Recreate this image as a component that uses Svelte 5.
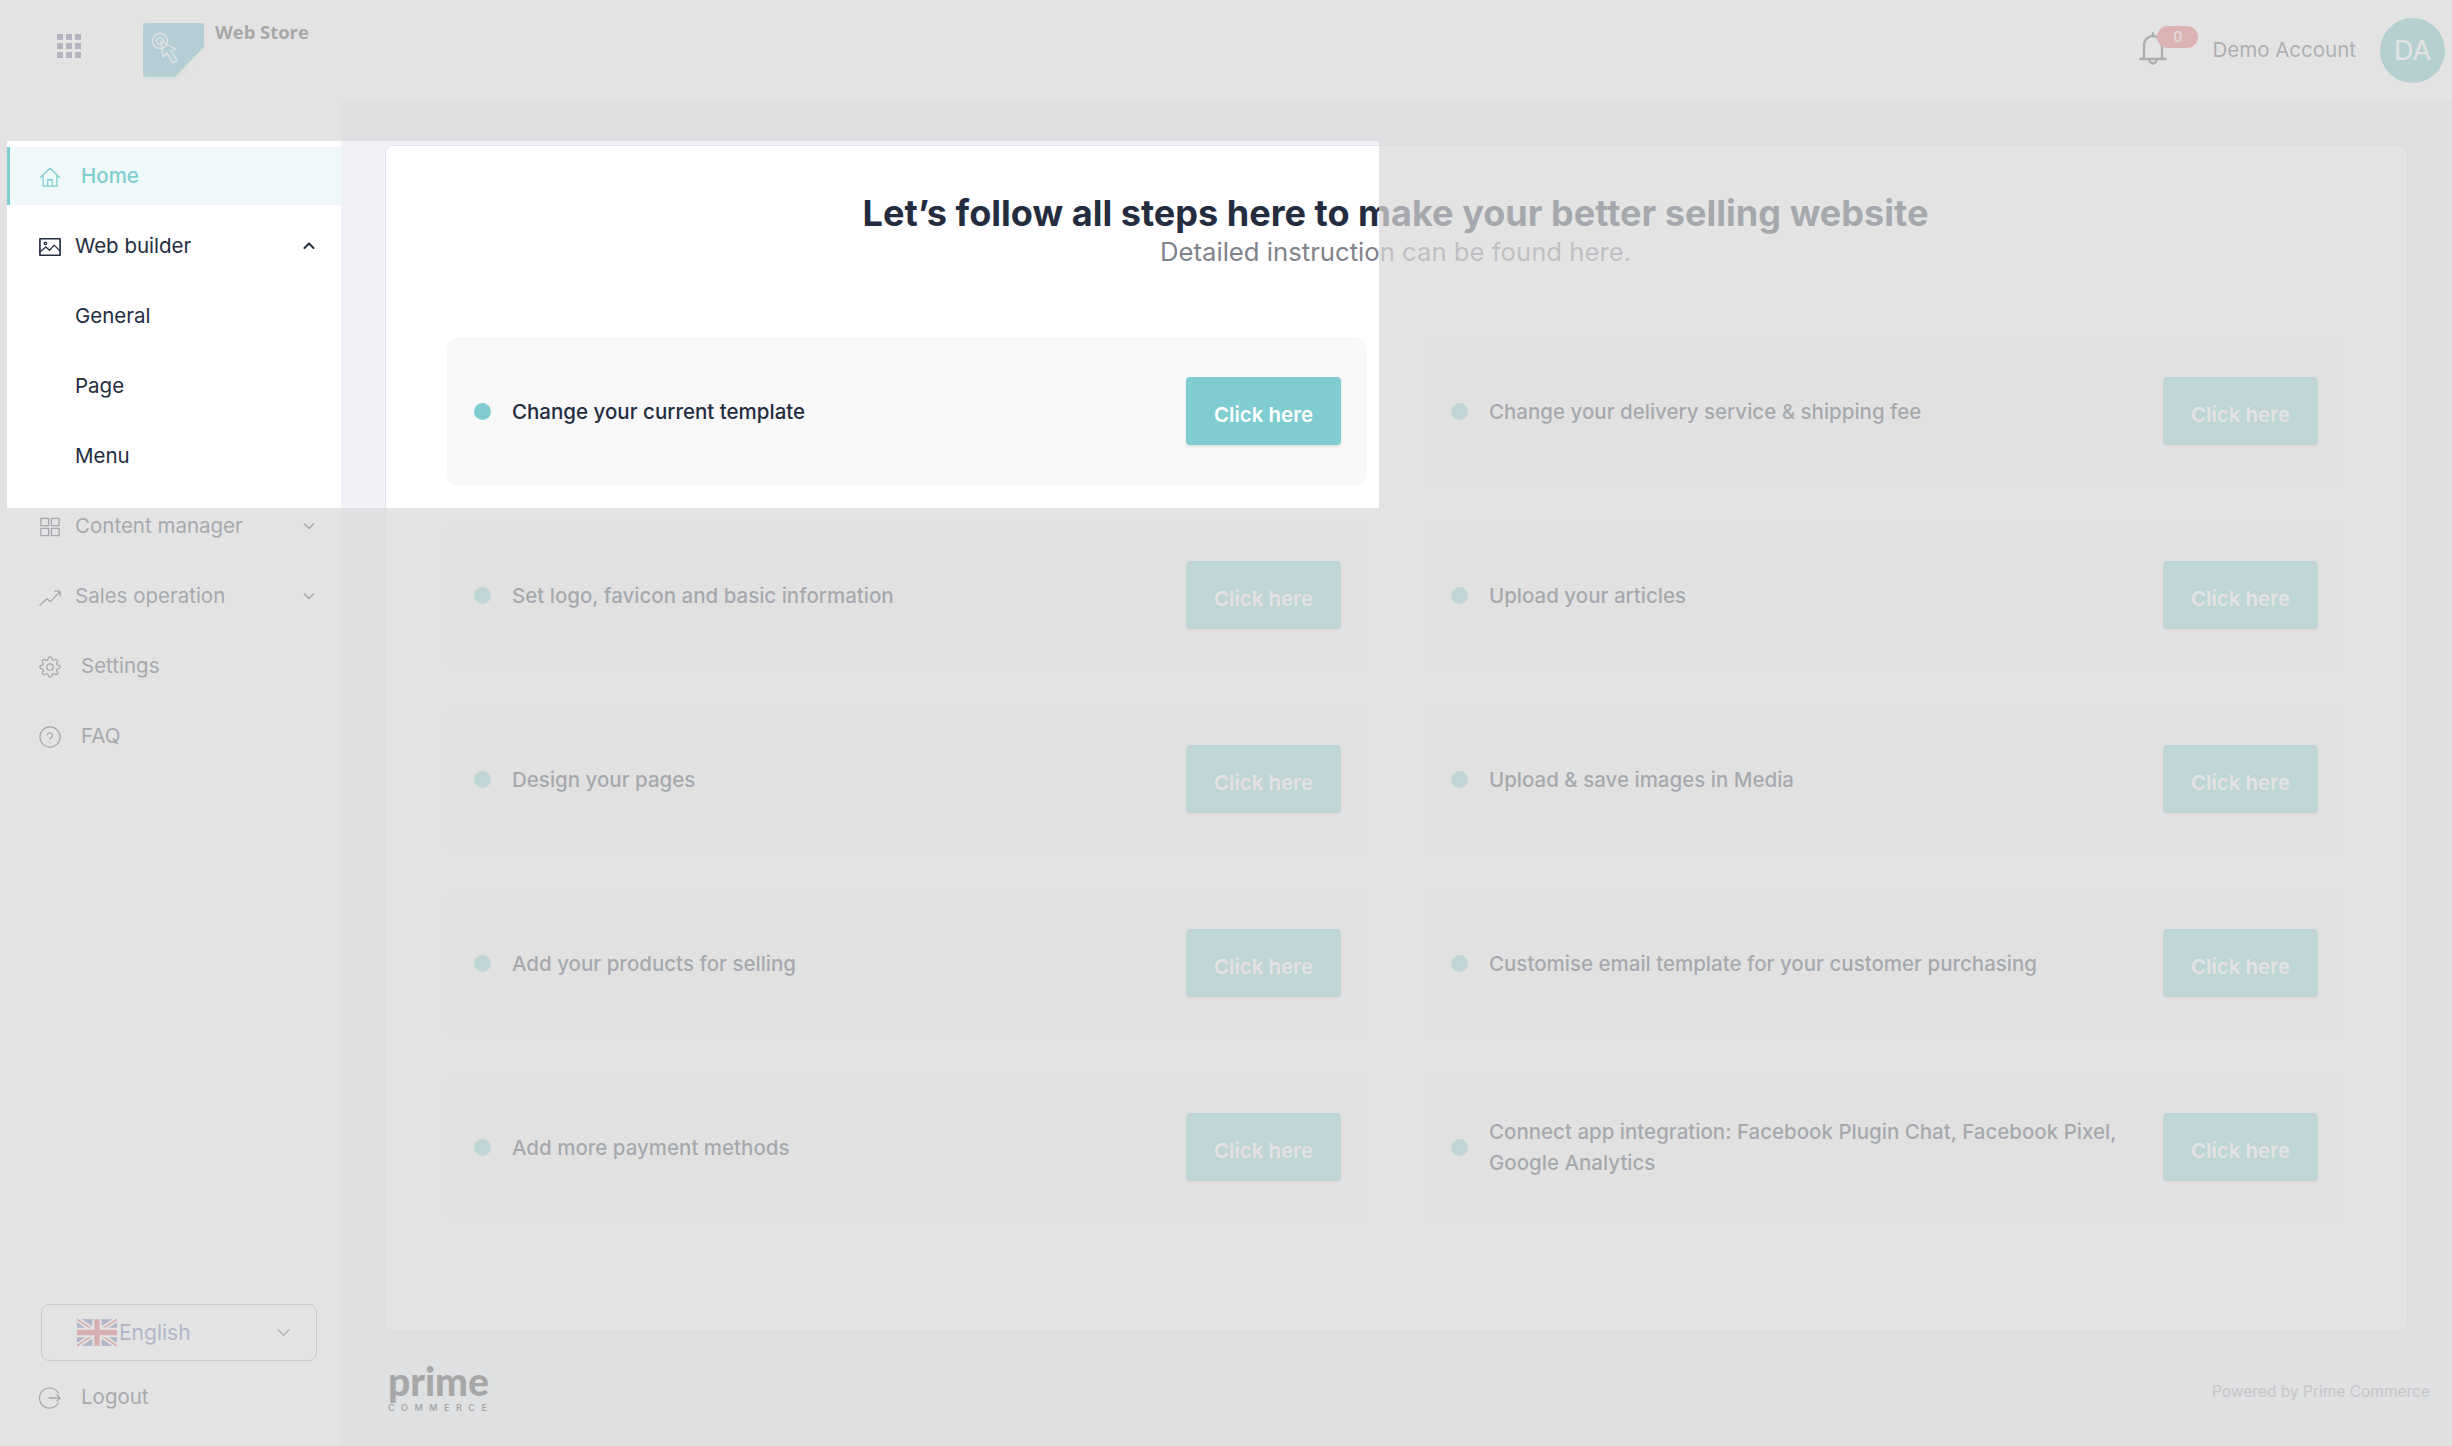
<script>
  const steps = [
    "Change your current template",
    "Change your delivery service & shipping fee",
    "Set logo, favicon and basic information",
    "Upload your articles",
    "Design your pages",
    "Upload & save images in Media",
    "Add your products for selling",
    "Customise email template for your customer purchasing",
    "Add more payment methods",
    "Connect app integration: Facebook Plugin Chat, Facebook Pixel, Google Analytics",
  ];

  const nav = [
    { label: "Home", icon: "home", active: true },
    { label: "Web builder", icon: "image", chevron: "up" },
    { label: "General", sub: true },
    { label: "Page", sub: true },
    { label: "Menu", sub: true },
    { label: "Content manager", icon: "grid", chevron: "down" },
    { label: "Sales operation", icon: "chart", chevron: "down" },
    { label: "Settings", icon: "gear", wide: true },
    { label: "FAQ", icon: "help", wide: true },
  ];
</script>

{#snippet icon(name)}
  <svg class="icon" viewBox="0 0 24 24" fill="none" stroke="currentColor" stroke-width="1.4" stroke-linecap="round" stroke-linejoin="round">
    {#if name === "home"}
      <path d="M1.500 12.500 12 2.500l10.500 10M4.500 10.500V22h15V10.500M9.500 22v-7h5v7" />
    {:else if name === "image"}
      <rect x="1" y="3" width="22" height="18" stroke-width="1.8" />
      <circle cx="7" cy="8" r="1.4" />
      <path d="m1.500 17 6-5 4 3.500 5-5.500 6 6" />
    {:else if name === "grid"}
      <rect x="2" y="2.500" width="8.500" height="8" />
      <rect x="13.500" y="2.500" width="8.500" height="8" />
      <rect x="2" y="13.500" width="8.500" height="8" />
      <rect x="13.500" y="13.500" width="8.500" height="8" />
    {:else if name === "chart"}
      <path d="m1 21 7.500-7 4 3L23 6M17 5.500h6v5.500" />
    {:else if name === "gear"}
      <circle cx="12" cy="12" r="3.500" />
      <path d="M19.400 15a1.650 1.650 0 0 0 .33 1.820l.06.06a2 2 0 0 1 0 2.830 2 2 0 0 1-2.830 0l-.06-.06a1.650 1.650 0 0 0-1.820-.33 1.650 1.650 0 0 0-1 1.510V21a2 2 0 0 1-2 2 2 2 0 0 1-2-2v-.09A1.650 1.650 0 0 0 9 19.400a1.650 1.650 0 0 0-1.820.33l-.06.06a2 2 0 0 1-2.830 0 2 2 0 0 1 0-2.830l.06-.06a1.650 1.650 0 0 0 .33-1.820 1.650 1.650 0 0 0-1.510-1H3a2 2 0 0 1-2-2 2 2 0 0 1 2-2h.09A1.650 1.650 0 0 0 4.600 9a1.650 1.650 0 0 0-.33-1.820l-.06-.06a2 2 0 0 1 0-2.830 2 2 0 0 1 2.830 0l.06.06a1.650 1.650 0 0 0 1.820.33H9a1.650 1.650 0 0 0 1-1.510V3a2 2 0 0 1 2-2 2 2 0 0 1 2 2v.09a1.650 1.650 0 0 0 1 1.510 1.650 1.650 0 0 0 1.820-.33l.06-.06a2 2 0 0 1 2.830 0 2 2 0 0 1 0 2.830l-.06.06a1.650 1.650 0 0 0-.33 1.820V9a1.650 1.650 0 0 0 1.510 1H21a2 2 0 0 1 2 2 2 2 0 0 1-2 2h-.09a1.650 1.650 0 0 0-1.510 1z" />
    {:else if name === "help"}
      <circle cx="12" cy="12" r="11" />
      <path d="M9 9.500a3 3 0 0 1 5.800.8c0 2-2.800 2.400-2.800 4M12 18h.01" />
    {:else if name === "logout"}
      <path d="M21 6.500A11 11 0 1 0 21 17.500M11 12h12M19.500 8.500 23 12l-3.500 3.500" />
    {/if}
  </svg>
{/snippet}

{#snippet chevron(dir)}
  <svg class="chevron" class:strong={dir === "up"} viewBox="0 0 12 8" fill="none" stroke="currentColor" stroke-width="1.5" stroke-linecap="round" stroke-linejoin="round">
    {#if dir === "up"}
      <path d="m1.500 6 4.500-4.500L10.500 6" />
    {:else}
      <path d="m1.500 2 4.500 4.500L10.500 2" />
    {/if}
  </svg>
{/snippet}

<div class="shell">
  <header class="topbar">
    <div class="apps">
      {#each Array(9) as _}
        <span></span>
      {/each}
    </div>
    <svg class="logo" viewBox="0 0 64 58">
      <path d="M5 3h55a3 3 0 0 1 3 3v21L35 57H5a3 3 0 0 1-3-3V6a3 3 0 0 1 3-3z" fill="#000" opacity="0.03" />
      <path d="M3 0h55a3 3 0 0 1 3 3v21L32 54H3a3 3 0 0 1-3-3V3a3 3 0 0 1 3-3z" fill="#5bb4d0" />
      <g fill="none" stroke="#fff" stroke-width="1.300" stroke-linecap="round" stroke-linejoin="round">
        <circle cx="17" cy="18" r="7.500" />
        <circle cx="17" cy="18" r="3.500" />
        <path d="m18 18 2 16 4-4 6 10 4-3-6-9 5-2z" />
      </g>
    </svg>
    <span class="store">Web Store</span>
    <div class="account">
      <div class="bell">
        <svg viewBox="0 0 28 34" fill="none" stroke="#3e4347" stroke-width="2.400" stroke-linecap="round" stroke-linejoin="round">
          <path d="M1.500 28h25M5 28V14a9 9 0 0 1 18 0v14M14 2.500V5M10.500 29a3.500 3.500 0 0 0 7 0" />
        </svg>
        <span class="badge">0</span>
      </div>
      <span class="name">Demo Account</span>
      <span class="avatar">DA</span>
    </div>
  </header>

  <div class="body">
    <aside class="sidebar">
      <nav class="nav">
        {#each nav as item}
          <a class="row" class:active={item.active} class:sub={item.sub} class:wide={item.wide} href="#top">
            {#if item.icon}
              {@render icon(item.icon)}
            {/if}
            <span class="label">{item.label}</span>
            {#if item.chevron}
              {@render chevron(item.chevron)}
            {/if}
          </a>
        {/each}
      </nav>
      <div class="bottom">
        <div class="lang">
          <svg class="flag" viewBox="0 0 60 40">
            <rect width="60" height="40" fill="#495a9e" />
            <path d="M0 0l60 40M60 0 0 40" stroke="#fff" stroke-width="8" />
            <path d="M0 0l60 40M60 0 0 40" stroke="#d8474e" stroke-width="2.500" />
            <path d="M30 0v40M0 20h60" stroke="#fff" stroke-width="14" />
            <path d="M30 0v40M0 20h60" stroke="#d8474e" stroke-width="8" />
          </svg>
          <span>English</span>
          <svg class="lang-caret" viewBox="0 0 14 9" fill="none" stroke="currentColor" stroke-width="1.300" stroke-linecap="round" stroke-linejoin="round">
            <path d="m1 1.500 6 6 6-6" />
          </svg>
        </div>
        <a class="row wide logout" href="#top">
          {@render icon("logout")}
          <span class="label">Logout</span>
        </a>
      </div>
    </aside>

    <main class="main">
      <section class="card">
        <h1>Let’s follow all steps here to make your better selling website</h1>
        <p class="lead">Detailed instruction can be found here.</p>
        <div class="steps">
          {#each steps as step}
            <div class="step">
              <span class="dot"></span>
              <span class="text">{step}</span>
              <button class="go">Click here</button>
            </div>
          {/each}
        </div>
      </section>
      <footer class="foot">
        <div class="brand">
          <span class="prime">prime</span>
          <span class="commerce">COMMERCE</span>
        </div>
        <span class="powered">Powered by Prime Commerce</span>
      </footer>
    </main>
  </div>

  <!-- tour spotlight: the shadow dims everything around the hole -->
  <div class="spotlight"></div>
</div>

<style>
  :global(body) {
    margin: 0;
    font-family: Inter, "Liberation Sans", sans-serif;
  }
  .shell {
    position: relative;
    display: flex;
    flex-direction: column;
    width: 100vw;
    height: 100vh;
    overflow: hidden;
    background: #fff;
    color: #232d3f;
  }
  .spotlight {
    position: absolute;
    left: 7px;
    top: 141px;
    width: 1372px;
    height: 367px;
    box-shadow: 0 0 0 3000px rgba(216, 216, 216, 0.72);
    pointer-events: none;
  }

  .topbar {
    display: flex;
    align-items: flex-start;
    flex: none;
    height: 101px;
    box-sizing: border-box;
    padding: 23px 7px 0 57px;
  }
  .apps {
    display: grid;
    grid-template-columns: repeat(3, 6px);
    gap: 3px;
    margin: 11px 62px 0 0;
  }
  .apps span {
    width: 6px;
    height: 6px;
    background: #575782;
  }
  .logo {
    width: 64px;
    height: 58px;
  }
  .store {
    margin: -4px 0 0 8px;
    font-family: "Open Sans", sans-serif;
    font-size: 18.400px;
    font-weight: 700;
    line-height: 26px;
    color: #2a2a2a;
  }
  .account {
    display: flex;
    align-items: center;
    margin: -5px 0 0 auto;
  }
  .bell {
    position: relative;
    width: 28px;
    height: 34px;
    margin: 0 45px 6px 0;
  }
  .bell svg {
    display: block;
    width: 28px;
    height: 34px;
  }
  .badge {
    position: absolute;
    left: 18px;
    top: -5px;
    width: 41px;
    height: 22px;
    border-radius: 11px;
    background: #e65454;
    color: #fff;
    font-size: 14px;
    line-height: 22px;
    text-align: center;
  }
  .name {
    margin: 0 24px 3px 0;
    font-size: 20.500px;
    color: #3e434b;
  }
  .avatar {
    width: 65px;
    height: 65px;
    border-radius: 50%;
    background: #5fb9bd;
    color: #fff;
    font-size: 27px;
    line-height: 65px;
    text-align: center;
  }

  .body {
    display: flex;
    flex: 1;
    min-height: 0;
  }
  .sidebar {
    display: flex;
    flex-direction: column;
    justify-content: space-between;
    flex: none;
    width: 341px;
    box-sizing: border-box;
    padding: 45.500px 0 25px 7px;
    background: #fff;
  }
  .nav {
    display: flex;
    flex-direction: column;
    gap: 12px;
  }
  .row {
    display: flex;
    align-items: center;
    gap: 14px;
    height: 58px;
    padding: 0 26px 0 32px;
    color: #232d3f;
    font-size: 20.500px;
    text-decoration: none;
  }
  .row.wide {
    gap: 20px;
  }
  .row.sub {
    padding-left: 68px;
  }
  .row.active {
    gap: 20px;
    background: #eff9fa;
    color: #7fcdd0;
    font-weight: 500;
    box-shadow: inset 3px 0 0 #7fcdd0;
  }
  .icon {
    flex: none;
    width: 22px;
    height: 22px;
    margin-top: 3px;
  }
  .chevron {
    width: 12px;
    height: 8px;
    margin-left: auto;
  }
  .chevron.strong {
    stroke-width: 2;
  }

  .bottom {
    display: flex;
    flex-direction: column;
  }
  .lang {
    display: flex;
    align-items: center;
    width: 276px;
    height: 57px;
    box-sizing: border-box;
    margin: 0 0 10.500px 34px;
    padding: 0 26px 0 35px;
    border: 1.500px solid #9ea0a4;
    border-radius: 8px;
    color: #495a9e;
    font-size: 21px;
  }
  .flag {
    width: 40px;
    height: 29px;
    margin-right: 2px;
  }
  .lang-caret {
    width: 13px;
    height: 9px;
    margin-left: auto;
    color: #555;
  }
  .logout {
    height: 50px;
  }

  .main {
    display: flex;
    flex-direction: column;
    flex: 1;
    min-width: 0;
    background: #f0f2f7;
    padding: 44px 44px 0;
  }
  .card {
    height: 1187px;
    box-sizing: border-box;
    padding: 44.500px 63px 0 61px;
    border: 1.500px solid #dfe3ef;
    border-radius: 8px;
    background: #fff;
    text-align: center;
  }
  h1 {
    margin: 0;
    font-size: 36.100px;
    font-weight: 700;
    line-height: 44px;
    color: #232d3f;
  }
  .lead {
    margin: 0;
    font-size: 25.700px;
    line-height: 34px;
    color: #7f838b;
  }
  .steps {
    display: grid;
    grid-template-columns: 1fr 1fr;
    gap: 35px 57px;
    margin-top: 68px;
    text-align: left;
  }
  .step {
    display: flex;
    align-items: center;
    height: 149px;
    box-sizing: border-box;
    padding: 0 26px 0 27px;
    border-radius: 12px;
    background: #f8f8f8;
  }
  .dot {
    flex: none;
    width: 17px;
    height: 17px;
    margin-right: 21px;
    border-radius: 50%;
    background: #7fcdd0;
  }
  .text {
    flex: 1;
    font-size: 20.500px;
    font-weight: 500;
    line-height: 31px;
    color: #232d3f;
  }
  .go {
    flex: none;
    width: 155px;
    height: 68px;
    margin-left: 24px;
    padding: 6px 0 0;
    border: none;
    border-radius: 4px;
    background: #7fcdd0;
    box-shadow: 0 2px 3px rgba(0, 0, 0, 0.08);
    color: #fff;
    font: 600 20.500px Inter, sans-serif;
  }

  .foot {
    display: flex;
    align-items: center;
    justify-content: space-between;
    flex: 1;
    padding: 4px 0 0 3px;
    margin-right: -22px;
  }
  .brand {
    display: flex;
    flex-direction: column;
    gap: 9px;
  }
  .prime {
    font-family: Lato, sans-serif;
    font-size: 39px;
    font-weight: 900;
    line-height: 24px;
    color: #2a2a2a;
  }
  .commerce {
    font-size: 9px;
    font-weight: 600;
    letter-spacing: 0.72em;
    line-height: 11px;
    color: #2a2a2a;
  }
  .powered {
    font-size: 15.500px;
    color: #94969c;
  }
</style>
